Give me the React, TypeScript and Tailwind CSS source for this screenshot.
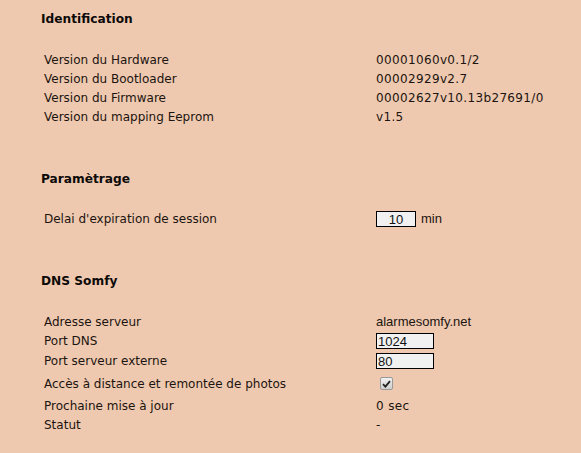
import React from "react";

type Row = { label: string; value: React.ReactNode; h: string };

const body = "font-['DejaVu_Sans',sans-serif] text-[12px] text-[#1c140f]";
const arial = "font-['Liberation_Sans',Arial,sans-serif] text-[13px]";

function Heading({ title, className }: { title: string; className: string }) {
  return (
    <h2
      className={`h-[19px] leading-[19px] font-bold text-[12.2px] text-[#0d0a08] font-['DejaVu_Sans',sans-serif] ${className}`}
    >
      {title}
    </h2>
  );
}

function Rows({ rows }: { rows: Row[] }) {
  return (
    <div className="flex flex-col pl-[3px]">
      {rows.map((r) => (
        <div key={r.label} className={`flex items-center ${r.h}`}>
          <div className="w-[332px] shrink-0">{r.label}</div>
          <div className="flex items-center">
            {typeof r.value === "string" ? (
              <span className="tracking-[0.35px]">{r.value}</span>
            ) : (
              r.value
            )}
          </div>
        </div>
      ))}
    </div>
  );
}

function Field({ value, width, center }: { value: string; width: string; center?: boolean }) {
  return (
    <input
      readOnly
      value={value}
      className={`${width} h-[16px] border border-black bg-[#f1f1f1] px-[1px] ${arial} leading-[14px] text-[#111] outline-none ${
        center ? "text-center" : "text-left"
      }`}
    />
  );
}

function Check() {
  return (
    <span className="ml-[4px] flex h-[13px] w-[13px] items-center justify-center rounded-[2px] border border-[#9a9a9a] bg-gradient-to-b from-[#f2f2f2] to-[#cfcfcf]">
      <svg width="9" height="8" viewBox="0 0 9 8">
        <path d="M1 4.2 L3.4 6.6 L8 1.2" fill="none" stroke="#222" strokeWidth="1.8" />
      </svg>
    </span>
  );
}

export default function App() {
  const ident: Row[] = [
    { label: "Version du Hardware", value: "00001060v0.1/2", h: "h-[19px]" },
    { label: "Version du Bootloader", value: "00002929v2.7", h: "h-[19px]" },
    { label: "Version du Firmware", value: "00002627v10.13b27691/0", h: "h-[19px]" },
    { label: "Version du mapping Eeprom", value: "v1.5", h: "h-[19px]" },
  ];

  const param: Row[] = [
    {
      label: "Delai d'expiration de session",
      value: (
        <>
          <Field value="10" width="w-[40px]" center />
          <span className={`ml-[5px] ${arial}`}>min</span>
        </>
      ),
      h: "h-[20px]",
    },
  ];

  const dns: Row[] = [
    {
      label: "Adresse serveur",
      value: <span className={arial}>alarmesomfy.net</span>,
      h: "h-[19px]",
    },
    { label: "Port DNS", value: <Field value="1024" width="w-[58px]" />, h: "h-[20px]" },
    { label: "Port serveur externe", value: <Field value="80" width="w-[58px]" />, h: "h-[20px]" },
    { label: "Accès à distance et remontée de photos", value: <Check />, h: "h-[25px]" },
    { label: "Prochaine mise à jour", value: "0 sec", h: "h-[19px]" },
    { label: "Statut", value: "-", h: "h-[19px]" },
  ];

  return (
    <div className={`min-h-[453px] w-full bg-[#eec9b0] pl-[41px] ${body}`}>
      <div className="flex flex-col pt-[10px]">
        <Heading title="Identification" className="mb-[21px]" />
        <Rows rows={ident} />
        <Heading title="Paramètrage" className="mt-[44px] mb-[20px]" />
        <Rows rows={param} />
        <Heading title="DNS Somfy" className="mt-[43px] mb-[21px]" />
        <Rows rows={dns} />
      </div>
    </div>
  );
}
